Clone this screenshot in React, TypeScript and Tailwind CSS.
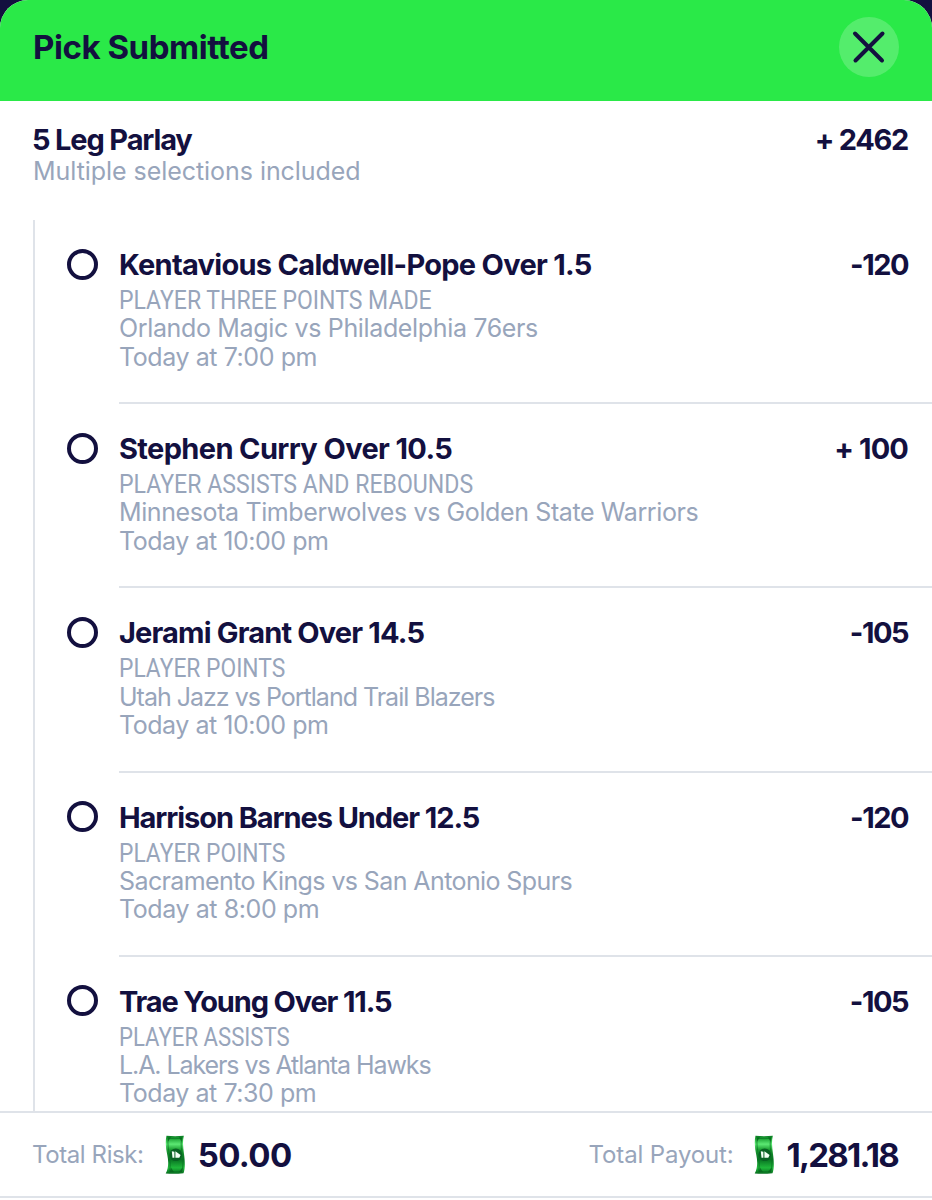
type Leg = {
  title: string
  titleClass: string
  market: string
  marketClass: string
  game: string
  gameClass: string
  time: string
  timeClass: string
  odds: string
  oddsClass: string
}

const LEGS: Leg[] = [
  {
    title: "Kentavious Caldwell-Pope Over 1.5",
    titleClass: "tracking-[-0.71px]",
    market: "PLAYER THREE POINTS MADE",
    marketClass: "scale-x-[0.92]",
    game: "Orlando Magic vs Philadelphia 76ers",
    gameClass: "tracking-[-0.35px]",
    time: "Today at 7:00 pm",
    timeClass: "tracking-[-0.42px]",
    odds: "-120",
    oddsClass: "tracking-[-1.5px]",
  },
  {
    title: "Stephen Curry Over 10.5",
    titleClass: "tracking-[-0.63px]",
    market: "PLAYER ASSISTS AND REBOUNDS",
    marketClass: "scale-x-[0.924]",
    game: "Minnesota Timberwolves vs Golden State Warriors",
    gameClass: "tracking-[-0.39px]",
    time: "Today at 10:00 pm",
    timeClass: "tracking-[-0.47px]",
    odds: "+ 100",
    oddsClass: "tracking-[-0.9px]",
  },
  {
    title: "Jerami Grant Over 14.5",
    titleClass: "tracking-[-0.84px]",
    market: "PLAYER POINTS",
    marketClass: "scale-x-[0.912]",
    game: "Utah Jazz vs Portland Trail Blazers",
    gameClass: "tracking-[-1px]",
    time: "Today at 10:00 pm",
    timeClass: "tracking-[-0.47px]",
    odds: "-105",
    oddsClass: "tracking-[-1.5px]",
  },
  {
    title: "Harrison Barnes Under 12.5",
    titleClass: "tracking-[-1.07px]",
    market: "PLAYER POINTS",
    marketClass: "scale-x-[0.912]",
    game: "Sacramento Kings vs San Antonio Spurs",
    gameClass: "tracking-[-0.6px]",
    time: "Today at 8:00 pm",
    timeClass: "tracking-[-0.42px]",
    odds: "-120",
    oddsClass: "tracking-[-1.5px]",
  },
  {
    title: "Trae Young Over 11.5",
    titleClass: "tracking-[-1.15px]",
    market: "PLAYER ASSISTS",
    marketClass: "scale-x-[0.886]",
    game: "L.A. Lakers vs Atlanta Hawks",
    gameClass: "tracking-[-1.08px]",
    time: "Today at 7:30 pm",
    timeClass: "tracking-[-0.45px]",
    odds: "-105",
    oddsClass: "tracking-[-1.5px]",
  },
]

function CloseIcon() {
  return (
    <svg width="60" height="60" viewBox="0 0 60 60" fill="none" stroke="#13103f" strokeWidth="4" strokeLinecap="round">
      <path d="M16 16.500 43 43.500M43.500 16.500 16.500 43.500" />
    </svg>
  )
}

function CashIcon() {
  return (
    <svg width="20" height="40" viewBox="0 0 20 40" className="shrink-0">
      <defs>
        <linearGradient id="bill" x1="0" y1="0" x2="0" y2="1">
          <stop offset="0" stopColor="#087c22" />
          <stop offset="0.08" stopColor="#20a838" />
          <stop offset="0.22" stopColor="#5ce873" />
          <stop offset="0.36" stopColor="#1d9f33" />
          <stop offset="0.62" stopColor="#087322" />
          <stop offset="0.84" stopColor="#20b83b" />
          <stop offset="1" stopColor="#076a1e" />
        </linearGradient>
      </defs>
      <path d="M1.500 0.800Q10 1.500 18.800 0.800C17.300 7 18.200 13 19 19S20.500 33 18.500 38.300Q9 39.300.700 38.500C4 32 3.500 26 2.300 20S0 7 1.500.800Z" fill="url(#bill)" />
      <path d="M3.400 3.300Q10 4 16.700 3.300C15.500 10 16.500 15 17.400 20S18.100 31 17 36.200Q10 37 4.200 36.300C6.300 30 5 24 4.200 19S2.300 8 3.400 3.300Z" fill="none" stroke="#087622" strokeWidth="0.7" />
      <path d="M2.500 2.300H6L3 6.500ZM17.200 2.300H14L16.300 6.500ZM4.500 37.300 6 32.500 9 37.300ZM17 37.300 17.500 32.500 13.800 37.300Z" fill="#07601c" opacity="0.7" />
      <circle cx="10.800" cy="19.800" r="6.300" fill="#086222" />
      <path d="M6.800 16.200 9.400 16.700V22.800H7.500ZM10.400 16.200 15.600 19.900 14.300 22.800H10.400Z" fill="#f1fff3" />
    </svg>
  )
}

function LegRow({ leg, last }: { leg: Leg; last: boolean }) {
  return (
    <li className="flex h-[184.2px] shrink-0 pl-8">
      <span className="mt-[28.5px] size-[31px] shrink-0 rounded-full border-4 border-[#13103f]" />
      <div className={`ml-[21px] flex-1 pt-[27px] ${last ? "" : "border-b-2 border-[#dfe3e9]"}`}>
        <div className="flex justify-between pr-6 text-[29px] leading-9 font-bold">
          <h3 className={leg.titleClass}>{leg.title}</h3>
          <span className={leg.oddsClass}>{leg.odds}</span>
        </div>
        <div className="mt-[3px] text-[25px] leading-[28.3px] text-[#98a5bb]">
          <p className={`w-fit origin-left translate-y-px font-['Roboto',sans-serif] ${leg.marketClass}`}>{leg.market}</p>
          <p><span className={leg.gameClass}>{leg.game}</span></p>
          <p><span className={leg.timeClass}>{leg.time}</span></p>
        </div>
      </div>
    </li>
  )
}

export default function App() {
  return (
    <div className="h-[1200px] w-[932px] overflow-hidden bg-[#13103f] font-['Inter',sans-serif] whitespace-nowrap text-[#13103f]">
      <div className="flex h-full flex-col overflow-hidden rounded-t-[28px] bg-white">
        <header className="flex h-[101px] shrink-0 items-start justify-between bg-[#2ae948] pr-[33px] pl-[33px]">
          <h1 className="mt-[27px] text-[33px] leading-10 font-bold tracking-[-0.45px]">Pick Submitted</h1>
          <button aria-label="Close" className="mt-[17px] size-[60px] rounded-full bg-white/20">
            <CloseIcon />
          </button>
        </header>

        <section className="flex h-[119px] shrink-0 justify-between pt-[21px] pr-6 pl-[33px]">
          <div>
            <h2 className="-ml-px text-[29px] leading-9 font-bold tracking-[-1.15px]">5 Leg Parlay</h2>
            <p className="-mt-0.5 text-[25px] leading-[30px] tracking-[-0.05px] text-[#98a5bb]">Multiple selections included</p>
          </div>
          <span className="text-[29px] leading-9 font-bold tracking-[-1.3px]">+ 2462</span>
        </section>

        <ul className="ml-[33px] flex min-h-0 flex-1 flex-col overflow-hidden border-l-2 border-[#dfe3e9]">
          {LEGS.map((leg, i) => (
            <LegRow key={leg.title} leg={leg} last={i === LEGS.length - 1} />
          ))}
        </ul>

        <footer className="flex h-[87px] shrink-0 items-center justify-between border-y-2 border-[#dfe3e9] pr-[34px] pl-8">
          <div className="flex items-center">
            <span className="text-[24px] tracking-[-0.4px] text-[#98a5bb]">Total Risk:</span>
            <span className="ml-[21px]"><CashIcon /></span>
            <span className="ml-[13px] text-[33px] leading-10 font-bold tracking-[-0.6px]">50.00</span>
          </div>
          <div className="flex items-center">
            <span className="text-[24px] tracking-[-0.15px] text-[#98a5bb]">Total Payout:</span>
            <span className="ml-5"><CashIcon /></span>
            <span className="ml-[13px] text-[33px] leading-10 font-bold tracking-[-1.75px]">1,281.18</span>
          </div>
        </footer>
        <div className="h-[2px] shrink-0" />
      </div>
    </div>
  )
}
